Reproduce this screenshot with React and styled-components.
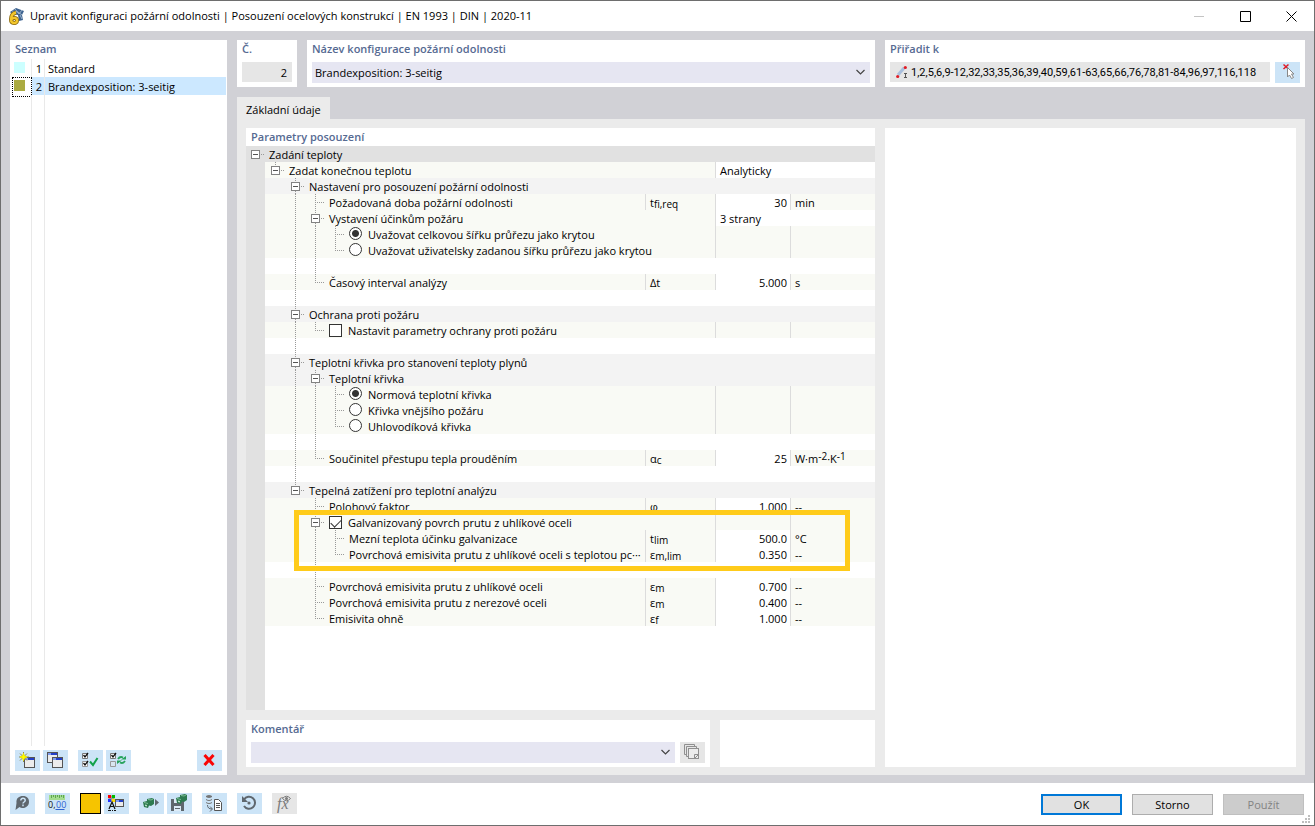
import React, { useState } from "react";
import styled, { createGlobalStyle, css } from "styled-components";

const GlobalStyle = createGlobalStyle`
  * {
    box-sizing: border-box;
  }

  html,
  body,
  #root {
    height: 100%;
    margin: 0;
  }

  body,
  button,
  input,
  select {
    color: #000;
    font-family: "Open Sans", "Noto Sans", sans-serif;
    font-size: 11px;
    line-height: 16px;
  }
`;

const Window = styled.div`
  display: flex;
  flex-direction: column;
  min-height: 100%;
  background-color: #fff;
  border: 1px solid #6e6e6e;
`;

const TitleBar = styled.header`
  display: flex;
  align-items: center;
  height: 30px;
  padding-left: 7px;
`;

const Title = styled.h1`
  flex: 1;
  margin: 0 0 0 6px;
  font-size: 11px;
  font-weight: normal;
  white-space: nowrap;
`;

const CaptionButton = styled.button`
  display: flex;
  align-items: center;
  justify-content: center;
  width: 46px;
  height: 28px;
  padding: 0;
  border: 0;
  background: none;
`;

const Body = styled.main`
  display: flex;
  flex: 1;
  gap: 10px;
  padding: 9px 9px 8px;
  background-color: #d1d1d6;
`;

const Panel = styled.section`
  display: flex;
  flex-direction: column;
  background-color: #fff;
`;

const Heading = styled.h2`
  margin: 0;
  padding-left: 5px;
  color: #566a92;
  font-size: 11px;
  font-weight: 600;
  line-height: 18px;
`;

const FieldHeading = styled(Heading)`
  margin-bottom: 4px;
`;

const ListPanel = styled(Panel)`
  width: 217px;
`;

const List = styled.ul`
  display: flex;
  flex: 1;
  flex-direction: column;
  margin: 1px 1px 4px 2px;
  padding: 0;
  list-style: none;
`;

const ListItem = styled.li`
  display: grid;
  grid-template-columns: 20px 13px 1fr;
  height: 18px;
  line-height: 20px;
  background: linear-gradient(${(props) => (props.$selected ? "#cce8ff, #cce8ff" : "#fff, #fff")})
    no-repeat 20px 0;
`;

const ListFill = styled.li`
  display: grid;
  flex: 1;
  grid-template-columns: 20px 13px 1fr;
`;

const ListCell = styled.span`
  padding-left: ${(props) => (props.$name ? "3px" : "0")};
  padding-right: 2px;
  border-right: ${(props) => (props.$name ? "0" : "1px solid #e9e9e9")};
  text-align: ${(props) => (props.$name ? "left" : "right")};
`;

const SwatchCell = styled.span`
  padding: 3px 0 0 2px;
  border-right: 1px solid #e9e9e9;
  ${(props) =>
    props.$selected &&
    css`
      padding: 2px 0 0 1px;
      border: 1px dotted #000;
    `}
`;

const Swatch = styled.span`
  display: block;
  width: 11px;
  height: 11px;
  background-color: ${(props) => props.$color};
`;

const ListTools = styled.div`
  display: flex;
  gap: 3px;
  padding: 0 5px 4px;
`;

const ToolButton = styled.button`
  flex: none;
  width: 25px;
  height: 21px;
  padding: 0;
  border: 0;
  margin-left: ${(props) => (props.$apart ? "7px" : "0")};
  background-color: ${(props) => (props.disabled ? "#e6e6e6" : "#cce4f7")};

  svg {
    display: block;
  }
`;

const DeleteButton = styled(ToolButton)`
  margin-left: auto;
`;

const Content = styled.div`
  display: flex;
  flex: 1;
  flex-direction: column;
  min-width: 0;
`;

const TopRow = styled.div`
  display: flex;
  gap: 10px;
  margin-bottom: 10px;
`;

const NumberPanel = styled(Panel)`
  width: 60px;
  padding: 0 5px 5px 0;
`;

const NumberInput = styled.input`
  width: 50px;
  height: 20px;
  margin-left: 5px;
  padding: 1px 5px 0;
  border: 0;
  background-color: #e6e6e6;
  text-align: right;
`;

const NamePanel = styled(Panel)`
  flex: 1;
`;

const SelectBox = styled.div`
  position: relative;
  flex: 1;
  margin: 0 5px 4px;

  svg {
    position: absolute;
    top: 7px;
    right: 5px;
    pointer-events: none;
  }
`;

const Select = styled.select`
  display: block;
  width: 100%;
  height: 21px;
  padding: 0 3px;
  border: 0;
  border-radius: 0;
  background-color: #e6e6f2;
  appearance: none;
`;

const AssignPanel = styled(Panel)`
  width: 420px;
`;

const AssignRow = styled.div`
  display: flex;
  gap: 5px;
  padding: 0 5px 4px;
`;

const AssignField = styled.div`
  display: flex;
  flex: 1;
  align-items: center;
  height: 20px;
  padding-left: 6px;
  background-color: #e6e6e6;
`;

const AssignInput = styled.input`
  flex: 1;
  min-width: 0;
  padding: 2px 0 0;
  border: 0;
  background: none;
  font-family: Roboto, "Open Sans", sans-serif;
`;

const Tab = styled.button`
  align-self: flex-start;
  height: 22px;
  padding: 3px 9px 0;
  border: 0;
  background-color: #ebebeb;
`;

const TabBody = styled.div`
  display: flex;
  flex: 1;
  gap: 10px;
  padding: 9px 9px 8px;
  background-color: #ebebeb;
`;

const TabLeft = styled.div`
  display: flex;
  flex: 1;
  flex-direction: column;
  gap: 10px;
`;

const PreviewPanel = styled(Panel)`
  width: 411px;
`;

const ParamPanel = styled(Panel)`
  flex: 1;
`;

const Tree = styled.div`
  position: relative;
  flex: 1;
  background: linear-gradient(to right, #e1e1e1 19px, #fff 19px);
`;

const TreeTable = styled.table`
  width: 100%;
  border-collapse: collapse;
  table-layout: fixed;
`;

const rowColors = {
  root: "#e1e1e1",
  group: "#f3f3f3",
  item: "#f9faf5",
  blank: "#fff",
};

const Row = styled.tr`
  height: 16px;
`;

const Cell = styled.td`
  height: 16px;
  padding: 0 0 0 5px;
  background-color: ${(props) => (props.$white ? "#fff" : rowColors[props.$kind])};
  box-shadow: ${(props) => (props.$line ? "inset 1px 0 #dcdcdc" : "none")};
  text-align: ${(props) => (props.$number ? "right" : "left")};
  white-space: nowrap;

  ${(props) => props.$number && "padding-right: 3px;"}
  ${(props) => props.$gutter && "padding: 0;"}

  sub,
  sup {
    font-size: 10px;
    line-height: 0;
    vertical-align: -1px;
  }

  sup {
    vertical-align: 3px;
  }
`;

const NameCell = styled(Cell)`
  padding: 0;
  overflow: hidden;
`;

const NameFlex = styled.div`
  display: flex;
  height: 16px;
`;

const CellText = styled.span`
  display: block;
  height: 16px;
  line-height: 18px;
`;

const Name = styled.label`
  display: flex;
  align-items: center;
  gap: 6px;
  padding-left: 4px;
`;

const dotsDown = "repeating-linear-gradient(#999 0 1px, transparent 1px 2px)";
const dotsAcross = "repeating-linear-gradient(to right, #999 0 1px, transparent 1px 2px)";

const has = (types, yes) => (props) => (types.includes(props.$type) ? yes : "none");

const Guide = styled.span`
  display: grid;
  flex: none;
  grid-template-columns: 10px 1px 9px;
  grid-template-rows: ${(props) => (props.$type === "l" ? "9px 7px" : "16px")};
  width: 20px;
  height: 16px;

  &::before {
    content: "";
    grid-area: 1 / 2;
    background: ${has("|tl", dotsDown)};
  }

  &::after {
    content: "";
    grid-area: 1 / 3;
    height: 1px;
    margin: 8px 0 0 1px;
    background: ${has("tl", dotsAcross)};
  }
`;

const ToggleSlot = styled.span`
  display: grid;
  grid-template-columns: ${(props) => (props.$root ? "5px 9px 5px" : "6px 9px 5px")};
  grid-template-rows: 4px 9px 3px;
  flex: none;
  height: 16px;

  &::before {
    content: "";
    grid-area: 1 / 2;
    width: 1px;
    margin-left: 4px;
    background: ${(props) => (props.$root ? "none" : dotsDown)};
  }

  &::after {
    content: "";
    grid-area: 2 / 3;
    height: 1px;
    margin: 4px 0 0 1px;
    background: ${dotsAcross};
  }
`;

const ToggleTail = styled.span`
  grid-area: 3 / 2;
  width: 1px;
  margin-left: 4px;
  background: ${dotsDown};
`;

const Toggle = styled.button`
  display: flex;
  grid-area: 2 / 2;
  align-items: center;
  justify-content: center;
  padding: 0;
  border: 1px solid #828282;
  background-color: #fff;

  &::before {
    content: "";
    width: 5px;
    height: 1px;
    background-color: #555;
  }
`;

const Radio = styled.input`
  flex: none;
  width: 13px;
  height: 13px;
  margin: 0 0 2px;
  border: 1px solid #333;
  border-radius: 50%;
  background-color: #fff;
  appearance: none;

  &:checked {
    background: radial-gradient(#333 0 3px, #fff 4px);
  }
`;

const CheckBox = styled.input`
  flex: none;
  width: 13px;
  height: 13px;
  margin: 0;
  border: 1px solid #333;
  background-color: #fff;
  appearance: none;

  &:checked::before {
    content: "";
    display: block;
    width: 9px;
    height: 5px;
    margin: 2px 1px;
    border: solid #333;
    border-width: 0 0 1px 1px;
    transform: rotate(-45deg);
  }
`;

const Highlight = styled.div`
  position: absolute;
  top: 364px;
  right: 25px;
  left: 48px;
  height: 61px;
  border: 5px solid #ffcb1a;
  pointer-events: none;
`;

const CommentRow = styled.div`
  display: grid;
  grid-template-columns: 1fr 155px;
  gap: 10px;
`;

const CommentFields = styled.div`
  display: flex;
  padding-right: 5px;
`;

const Footer = styled.footer`
  display: flex;
  align-items: flex-start;
  height: 42px;
  padding: 10px 2px 0 9px;
`;

const FooterTools = styled.div`
  display: flex;
  flex: 1;
  gap: 3px;
`;

const ColorButton = styled(ToolButton)`
  width: 21px;
  border: 1px solid #000;
  background-color: #f6c400;
`;

const DialogButtons = styled.div`
  display: flex;
  gap: 10px;
  padding-top: 1px;
`;

const DialogButton = styled.button`
  width: 81px;
  height: 21px;
  padding: 0;
  border: ${(props) => (props.$primary ? "2px solid #0078d7" : "1px solid #adadad")};
  background-color: #e1e1e1;

  &:disabled {
    border-color: #bfbfbf;
    background-color: #ccc;
    color: #838383;
  }
`;

const Grip = styled.svg`
  align-self: flex-end;
  margin-left: -2px;
`;

const Icon = ({ children }) => (
  <svg width="25" height="21" viewBox="0 0 25 21" fill="none" aria-hidden="true">
    {children}
  </svg>
);

const Chevron = () => (
  <svg width="9" height="7" viewBox="0 0 9 7" fill="none" stroke="#444" strokeWidth="1.2">
    <path d="M.5 1l4 4 4-4" />
  </svg>
);

const MiniWindow = ({ x, y, w = 10, h = 10 }) => (
  <>
    <rect x={x + 0.5} y={y + 0.5} width={w} height={h} fill="#ececec" stroke="#555" />
    <path d={`M${x + 1} ${y + 2}h3`} stroke="#7f9cf0" strokeWidth="2" />
    <path d={`M${x + 4} ${y + 2}h${w - 4}`} stroke="#2440c8" strokeWidth="2" />
  </>
);

const AppIcon = () => (
  <svg width="16" height="17" viewBox="0 0 16 17" aria-hidden="true">
    <path d="M2 4l6-4 8 3-2 4 1 5-4 1-1-6-6-1z" fill="#3e6390" />
    <path d="M4 3l6 1 4 3M7 1l4 5 3-4M12 7l2 4" stroke="#9db5cc" fill="none" />
    <path
      d="M8 4.5C4 5.5 3 9 3 11.5c0 4.5 6 4.5 6 1 0-3-4-3.5-5.5-1"
      fill="none"
      stroke="#8c6a10"
      strokeWidth="4"
    />
    <path
      d="M8 4.5C4 5.5 3 9 3 11.5c0 4.5 6 4.5 6 1 0-3-4-3.5-5.5-1"
      fill="none"
      stroke="#f3c72c"
      strokeWidth="2.4"
    />
  </svg>
);

const NewIcon = () => (
  <Icon>
    <MiniWindow x={9} y={7} />
    <path d="M8.500 2v10M4 7h10M5 3.500l7 7M12 3.500l-7 7" stroke="#8b8b50" />
    <path d="M8.500 3.500l1 2.500 2.500 1-2.500 1-1 2.500-1-2.500L5 7l2.500-1z" fill="#ff0" stroke="#f4e800" />
  </Icon>
);

const CopyIcon = () => (
  <Icon>
    <MiniWindow x={4} y={2} />
    <MiniWindow x={9} y={7} />
  </Icon>
);

const CheckPair = ({ second }) => (
  <>
    <path d="M4.500 3.500h5v5h-5z" fill="#fff" stroke="#777" />
    <path d="M4.500 11.500h5v5h-5z" fill={second ? "#fff" : "#d9e6f0"} stroke="#999" />
    <path d="M5.500 5l1.500 2 3-4" stroke="#111" strokeWidth="1.3" />
    {second && <path d="M5.500 13l1.500 2 3-4" stroke="#111" strokeWidth="1.3" />}
  </>
);

const CheckAllIcon = () => (
  <Icon>
    <CheckPair second />
    <path d="M12 11.500l3 3.500 4.500-7" stroke="#13a24a" strokeWidth="2" />
  </Icon>
);

const InvertIcon = () => (
  <Icon>
    <CheckPair />
    <path d="M12 9q2-3 5-1.500M19 11q-2 3-5 1.500" stroke="#27a35c" strokeWidth="1.8" />
    <path d="M20 6v3.500h-5zM11 14v-3.500h5z" fill="#27a35c" />
  </Icon>
);

const DeleteIcon = () => (
  <Icon>
    <path d="M7.500 5l9 10M16.500 5l-9 10" stroke="#f90606" strokeWidth="3" />
  </Icon>
);

const PickIcon = () => (
  <Icon>
    <path d="M8.500 2.500l5 4.500M13.500 2.500l-5 4.500" stroke="#e01b24" strokeWidth="1.5" />
    <path d="M12.500 5.500v9.500l2-2 2 3.500 2-1-2-3.500h2.500z" fill="#fff" stroke="#888" />
  </Icon>
);

const MemberIcon = () => (
  <svg width="15" height="14" viewBox="0 0 15 14" fill="none" aria-hidden="true">
    <path d="M2 10l6-7" stroke="#a9bfdd" strokeWidth="3" />
    <circle cx="1.7" cy="11.5" r="1.6" fill="#e01b24" />
    <circle cx="9.3" cy="2.5" r="1.6" fill="#e01b24" />
    <path d="M8 8.500h3M8 12.500h3M9.500 9v3" stroke="#555" />
  </svg>
);

const PasteIcon = () => (
  <Icon>
    <path d="M6 12.500H4.500v-10h10V4M8 14.500H6.500v-10h10V6" stroke="#8f8f8f" />
    <rect x="8.5" y="6.5" width="10" height="10" fill="#ececec" stroke="#8f8f8f" />
    <path d="M14.500 16v-3.500H18M15 16l3-3" stroke="#8f8f8f" />
  </Icon>
);

const HelpIcon = () => (
  <Icon>
    <path
      d="M13 3c4 0 6 2.500 6 6 0 3.500-3 6-6 6-1.500 0-2.500-.3-3.500-1L5.500 17l1-7C6 5 9 3 13 3z"
      fill="#5f676e"
    />
    <path
      d="M10.800 7.500c0-3 4.400-2.800 4.400 0 0 1.500-2.200 1.500-2.200 3M13 11.500v1.700"
      stroke="#cce4f7"
      strokeWidth="1.5"
    />
  </Icon>
);

const UnitsIcon = () => (
  <Icon>
    <path d="M4 2h16v5H4z" fill="#a3dc8f" />
    <path d="M6.500 2v3M8.500 2v2M10.500 2v3M12.500 2v2M14.500 2v3M16.500 2v2M18.500 2v3" stroke="#5da552" />
    <text x="3" y="15" fill="#111" fontSize="9">
      0,
    </text>
    <text x="11" y="15" fill="#2e62d0" fontSize="9">
      00
    </text>
    <path d="M10.500 16.500h9" stroke="#2e62d0" />
  </Icon>
);

const DisplayIcon = () => (
  <Icon>
    <path d="M4.500 2.500h6v6h-6z" fill="#999" />
    <path d="M4 2h3v3H4z" fill="#f00" />
    <path d="M8 2h3v3H8z" fill="#0b0" />
    <path d="M4 6h3v3H4z" fill="#23f" />
    <path d="M8 6h3v3H8z" fill="#fd0" />
    <path d="M5 16l3-7 3 7M6 13.500h4" stroke="#111" strokeWidth="1.2" />
    <path d="M4 17.500h3M8 17.500h1M10 17.500h2" stroke="#111" />
    <MiniWindow x={11} y={6} w={8} h={7} />
  </Icon>
);

const Cube = ({ x, y }) => (
  <g transform={`translate(${x} ${y})`}>
    <path d="M0 4l4-1V1l5-1 2 1v5L8 8 6 7.500 5 10l-4-1z" fill="#2d7a50" />
    <path d="M1 4.500l4 1M5 1.500l3 .5 2-1" stroke="#7dbd95" />
    <path d="M2 6.500l2 .5v1.500L2 8z" fill="#b9dcc5" />
  </g>
);

const ExportIcon = () => (
  <Icon>
    <Cube x={4} y={5} />
    <path d="M16 6l4 3.500-4 3.500z" fill="#5f676e" />
  </Icon>
);

const SaveIcon = () => (
  <Icon>
    <path d="M4 6h11l2 2v10H4z" fill="#5f676e" />
    <path d="M7 6h6v4H7zM7 13h7v5H7z" fill="#dcebf7" />
    <path d="M8 15.500h5M11.500 6v3" stroke="#5f676e" />
    <Cube x={9} y={1} />
  </Icon>
);

const DatabaseIcon = () => (
  <Icon>
    <path
      d="M4 3q3-2 6 0v1q-3 2-6 0zM4 6q3 2 6 0v1q-3 2-6 0zM4 9q3 2 6 0v1q-3 2-6 0z"
      fill="#777"
    />
    <path d="M5.500 12q0 4 4.500 4M8 13.500l2.500 2.500L8 18.500" stroke="#5f676e" />
    <path d="M12.500 6.500h4l3 3v8h-7z" fill="#fff" stroke="#555" />
    <path d="M14 10.500h4M14 12.500h4M14 14.500h4" stroke="#555" />
  </Icon>
);

const ResetIcon = () => (
  <Icon>
    <path d="M7 6.500A6 6 0 1 1 7 13" stroke="#5f676e" strokeWidth="2" />
    <path d="M5 3v6h6z" fill="#5f676e" />
    <circle cx="12" cy="10" r="1.6" fill="#5f676e" />
  </Icon>
);

const FormulaIcon = () => (
  <Icon>
    <text x="5" y="16" fill="#7b7b7b" fontFamily="Liberation Serif" fontSize="16" fontStyle="italic">
      fx
    </text>
    <path d="M10.500 5.500q4-4.500 8 0-4 4.500-8 0z" fill="#e6e6e6" stroke="#7b7b7b" />
    <circle cx="14.5" cy="5.5" r="1.5" fill="#7b7b7b" />
  </Icon>
);

// guides: one character per tree level
// "." empty, "|" line, "t" branch, "l" last branch, "m" toggle, "e" last toggle
const rows = [
  { kind: "root", name: "Zadání teploty" },
  { kind: "item", guides: "e", name: "Zadat konečnou teplotu", choice: "Analyticky" },
  { kind: "group", guides: ".m", name: "Nastavení pro posouzení požární odolnosti" },
  { kind: "item", guides: ".|t", name: "Požadovaná doba požární odolnosti", symbol: "t", sub: "fi,req", value: "30", unit: "min" },
  { kind: "item", guides: ".|m", name: "Vystavení účinkům požáru", choice: "3 strany" },
  { kind: "item", guides: ".||t", name: "Uvažovat celkovou šířku průřezu jako krytou", radio: "width", checked: true },
  { kind: "item", guides: ".||l", name: "Uvažovat uživatelsky zadanou šířku průřezu jako krytou", radio: "width" },
  { kind: "blank", guides: ".||" },
  { kind: "item", guides: ".|l", name: "Časový interval analýzy", symbol: "Δt", value: "5.000", unit: "s" },
  { kind: "blank", guides: ".|" },
  { kind: "group", guides: ".m", name: "Ochrana proti požáru" },
  { kind: "item", guides: ".|l", name: "Nastavit parametry ochrany proti požáru", check: true },
  { kind: "blank", guides: ".|" },
  { kind: "group", guides: ".m", name: "Teplotní křivka pro stanovení teploty plynů" },
  { kind: "group", guides: ".|m", name: "Teplotní křivka" },
  { kind: "item", guides: ".||t", name: "Normová teplotní křivka", radio: "curve", checked: true },
  { kind: "item", guides: ".||t", name: "Křivka vnějšího požáru", radio: "curve" },
  { kind: "item", guides: ".||l", name: "Uhlovodíková křivka", radio: "curve" },
  { kind: "blank", guides: ".||" },
  { kind: "item", guides: ".|l", name: "Součinitel přestupu tepla prouděním", symbol: "α", sub: "c", value: "25", unit: <>W·m<sup>-2</sup>·K<sup>-1</sup></> },
  { kind: "blank", guides: ".|" },
  { kind: "group", guides: ".e", name: "Tepelná zatížení pro teplotní analýzu" },
  { kind: "item", guides: "..t", name: "Polohový faktor", symbol: "φ", value: "1.000", unit: "--" },
  { kind: "item", guides: "..m", name: "Galvanizovaný povrch prutu z uhlíkové oceli", check: true, checked: true },
  { kind: "item", guides: "..|t", name: "Mezní teplota účinku galvanizace", symbol: "t", sub: "lim", value: "500.0", unit: "°C" },
  { kind: "item", guides: "..|l", name: "Povrchová emisivita prutu z uhlíkové oceli s teplotou pc···", symbol: "ε", sub: "m,lim", value: "0.350", unit: "--" },
  { kind: "blank", guides: "..|" },
  { kind: "item", guides: "..t", name: "Povrchová emisivita prutu z uhlíkové oceli", symbol: "ε", sub: "m", value: "0.700", unit: "--" },
  { kind: "item", guides: "..t", name: "Povrchová emisivita prutu z nerezové oceli", symbol: "ε", sub: "m", value: "0.400", unit: "--" },
  { kind: "item", guides: "..l", name: "Emisivita ohně", symbol: "ε", sub: "f", value: "1.000", unit: "--" },
];

const TreeGuide = ({ type }) => {
  if (type === "m" || type === "e") {
    return (
      <ToggleSlot>
        <Toggle aria-label="Sbalit" />
        {type === "m" && <ToggleTail />}
      </ToggleSlot>
    );
  }
  return <Guide $type={type} />;
};

const TreeRow = ({ row }) => {
  const { kind, guides = "", name, symbol, sub, value, unit, choice, radio, check, checked } = row;
  const full = kind !== "item";

  return (
    <Row>
      <Cell $kind="root" $gutter>
        {kind === "root" && (
          <ToggleSlot $root>
            <Toggle aria-label="Sbalit" />
          </ToggleSlot>
        )}
      </Cell>
      <NameCell $kind={kind} colSpan={full ? 4 : symbol ? 1 : 2}>
        <NameFlex>
          {guides.split("").map((type, i) => (
            <TreeGuide key={i} type={type} />
          ))}
          {name && (
            <Name as={radio || check ? "label" : "span"}>
              {radio && <Radio type="radio" name={radio} defaultChecked={checked} />}
              {check && <CheckBox type="checkbox" defaultChecked={checked} />}
              <CellText>{name}</CellText>
            </Name>
          )}
        </NameFlex>
      </NameCell>
      {symbol && (
        <Cell $kind={kind} $line>
          <CellText>
            {symbol}
            {sub && <sub>{sub}</sub>}
          </CellText>
        </Cell>
      )}
      {choice && (
        <Cell $kind={kind} $line $white colSpan={2}>
          <CellText>{choice}</CellText>
        </Cell>
      )}
      {!full && !choice && (
        <>
          <Cell $kind={kind} $line $number $white={!!value}>
            <CellText>{value}</CellText>
          </Cell>
          <Cell $kind={kind} $line>
            <CellText>{unit}</CellText>
          </Cell>
        </>
      )}
    </Row>
  );
};

const configs = [
  { id: 1, name: "Standard", color: "#ccffff" },
  { id: 2, name: "Brandexposition: 3-seitig", color: "#abab41" },
];

const App = () => {
  const [selected, setSelected] = useState(2);

  return (
    <>
      <GlobalStyle />
      <Window>
        <TitleBar>
          <AppIcon />
          <Title>
            Upravit konfiguraci požární odolnosti | Posouzení ocelových konstrukcí | EN 1993 | DIN | 2020-11
          </Title>
          <CaptionButton aria-label="Minimalizovat" disabled>
            <svg width="11" height="11" stroke="#c4c4c4"><path d="M0 5.500h10" /></svg>
          </CaptionButton>
          <CaptionButton aria-label="Maximalizovat">
            <svg width="11" height="11" fill="none" stroke="#000"><path d="M.5.500h10v10H.5z" /></svg>
          </CaptionButton>
          <CaptionButton aria-label="Zavřít">
            <svg width="11" height="11" stroke="#000"><path d="M.5.500l10 10M10.500.500l-10 10" /></svg>
          </CaptionButton>
        </TitleBar>

        <Body>
          <ListPanel>
            <Heading>Seznam</Heading>
            <List>
              {configs.map((config) => (
                <ListItem
                  key={config.id}
                  $selected={config.id === selected}
                  onClick={() => setSelected(config.id)}
                >
                  <SwatchCell $selected={config.id === selected}>
                    <Swatch $color={config.color} />
                  </SwatchCell>
                  <ListCell>{config.id}</ListCell>
                  <ListCell $name>{config.name}</ListCell>
                </ListItem>
              ))}
              <ListFill aria-hidden="true">
                <ListCell />
                <ListCell />
              </ListFill>
            </List>
            <ListTools>
              <ToolButton aria-label="Nový"><NewIcon /></ToolButton>
              <ToolButton aria-label="Kopírovat"><CopyIcon /></ToolButton>
              <ToolButton $apart aria-label="Vybrat vše"><CheckAllIcon /></ToolButton>
              <ToolButton aria-label="Obrátit výběr"><InvertIcon /></ToolButton>
              <DeleteButton aria-label="Smazat"><DeleteIcon /></DeleteButton>
            </ListTools>
          </ListPanel>

          <Content>
            <TopRow>
              <NumberPanel>
                <FieldHeading as="label" htmlFor="number">Č.</FieldHeading>
                <NumberInput id="number" value={selected} readOnly />
              </NumberPanel>
              <NamePanel>
                <FieldHeading as="label" htmlFor="name">Název konfigurace požární odolnosti</FieldHeading>
                <SelectBox>
                  <Select
                    id="name"
                    value={selected}
                    onChange={(e) => setSelected(Number(e.target.value))}
                  >
                    {configs.map((config) => (
                      <option key={config.id} value={config.id}>{config.name}</option>
                    ))}
                  </Select>
                  <Chevron />
                </SelectBox>
              </NamePanel>
              <AssignPanel>
                <FieldHeading as="label" htmlFor="assign">Přiřadit k</FieldHeading>
                <AssignRow>
                  <AssignField>
                    <MemberIcon />
                    <AssignInput
                      id="assign"
                      readOnly
                      value="1,2,5,6,9-12,32,33,35,36,39,40,59,61-63,65,66,76,78,81-84,96,97,116,118"
                    />
                  </AssignField>
                  <ToolButton aria-label="Vybrat"><PickIcon /></ToolButton>
                </AssignRow>
              </AssignPanel>
            </TopRow>

            <Tab>Základní údaje</Tab>
            <TabBody>
              <TabLeft>
                <ParamPanel>
                  <Heading>Parametry posouzení</Heading>
                  <Tree>
                    <TreeTable>
                      <colgroup>
                        <col style={{ width: 19 }} />
                        <col />
                        <col style={{ width: 70 }} />
                        <col style={{ width: 75 }} />
                        <col style={{ width: 85 }} />
                      </colgroup>
                      <tbody>
                        {rows.map((row, i) => (
                          <TreeRow key={i} row={row} />
                        ))}
                      </tbody>
                    </TreeTable>
                    <Highlight />
                  </Tree>
                </ParamPanel>
                <CommentRow>
                  <Panel>
                    <FieldHeading as="label" htmlFor="comment">Komentář</FieldHeading>
                    <CommentFields>
                      <SelectBox>
                        <Select id="comment"><option /></Select>
                        <Chevron />
                      </SelectBox>
                      <ToolButton disabled aria-label="Upravit komentář"><PasteIcon /></ToolButton>
                    </CommentFields>
                  </Panel>
                  <Panel />
                </CommentRow>
              </TabLeft>
              <PreviewPanel />
            </TabBody>
          </Content>
        </Body>

        <Footer>
          <FooterTools>
            <ToolButton aria-label="Nápověda"><HelpIcon /></ToolButton>
            <ToolButton $apart aria-label="Jednotky"><UnitsIcon /></ToolButton>
            <ColorButton $apart aria-label="Barva" />
            <ToolButton aria-label="Zobrazení"><DisplayIcon /></ToolButton>
            <ToolButton $apart aria-label="Načíst"><ExportIcon /></ToolButton>
            <ToolButton aria-label="Uložit"><SaveIcon /></ToolButton>
            <ToolButton $apart aria-label="Databáze"><DatabaseIcon /></ToolButton>
            <ToolButton $apart aria-label="Obnovit"><ResetIcon /></ToolButton>
            <ToolButton $apart disabled aria-label="Vzorce"><FormulaIcon /></ToolButton>
          </FooterTools>
          <DialogButtons>
            <DialogButton $primary>OK</DialogButton>
            <DialogButton>Storno</DialogButton>
            <DialogButton disabled>Použít</DialogButton>
          </DialogButtons>
          <Grip width="10" height="10" fill="#bfbfbf" aria-hidden="true">
            <path d="M6 0h2v2H6zM3 3h2v2H3zM6 3h2v2H6zM0 6h2v2H0zM3 6h2v2H3zM6 6h2v2H6z" />
          </Grip>
        </Footer>
      </Window>
    </>
  );
};

export default App;
